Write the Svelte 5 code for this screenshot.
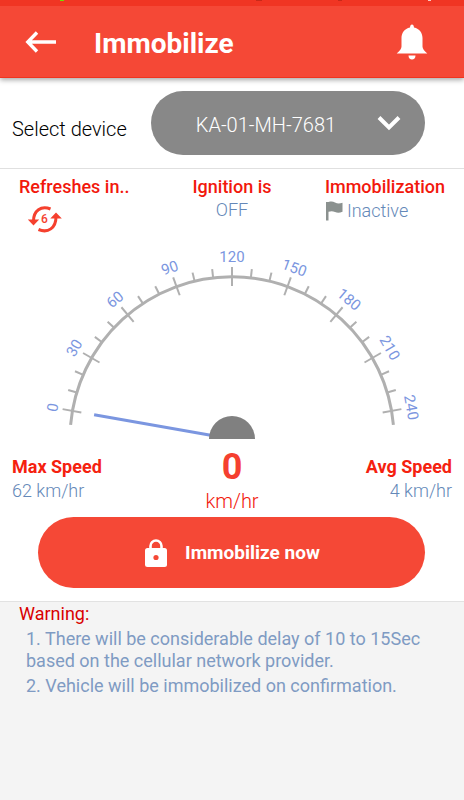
<script>
  const devices = ['KA-01-MH-7681']
  let device = $state(devices[0])
  let speed = $state(0)
  let maxSpeed = 62
  let avgSpeed = 4
  let refreshIn = 6

  // gauge: 0 sits 10deg above the left horizontal, 240 mirrors it
  const cx = 190
  const cy = 190
  const r = 162
  const steps = Array.from({ length: 25 }, (_, i) => i * 10)
  const angle = (v) => -80 + (v / 240) * 160
</script>

<div class="app">
  <header>
    <div class="statusbar">
      <svg width="100%" height="2" aria-hidden="true">
        <rect x="60" width="4" height="1" fill="#6fe000" />
        <rect x="256" width="6" height="1" fill="#c62a1a" />
        <rect x="338" width="4" height="1" fill="#c62a1a" />
        <rect x="428" width="3" height="1" fill="#f8c9c3" />
      </svg>
    </div>
    <div class="toolbar">
      <button class="icon" aria-label="Back">
        <svg width="32" height="22" viewBox="0 0 32 22" fill="none" stroke="#fff" stroke-width="3.400">
          <path d="M31 11H3M12 1.500L2.800 11L12 20.500" />
        </svg>
      </button>
      <h1>Immobilize</h1>
      <button class="icon" aria-label="Notifications">
        <svg width="32" height="36" viewBox="0 0 32 36" fill="#fff">
          <path d="M16 .5c1.200 0 1.800 1 2 3C23.500 4.600 26.500 9 26.500 14v8.500c0 2.200 1.500 4 4.800 7H.7c3.300-3 4.800-4.800 4.800-7V14C5.500 9 8.500 4.600 14 3.500c.2-2 .8-3 2-3z" />
          <path d="M12.500 31.500h7c0 2.500-1.500 4-3.500 4s-3.500-1.500-3.500-4z" />
        </svg>
      </button>
    </div>
  </header>

  <div class="device">
    <label for="device">Select device</label>
    <div class="picker">
      <select id="device" bind:value={device}>
        {#each devices as d}
          <option>{d}</option>
        {/each}
      </select>
      <svg width="24" height="16" viewBox="0 0 24 16" fill="none" stroke="#fff" stroke-width="4" aria-hidden="true">
        <path d="M2 2.500L12 12.500L22 2.500" />
      </svg>
    </div>
  </div>

  <div class="status">
    <div>
      <h2>Refreshes in..</h2>
      <button class="refresh" aria-label="Refresh">
        <svg width="36" height="30" viewBox="0 0 36 30">
          <g fill="none" stroke="#f5402e" stroke-width="3">
            <path d="M23.500 5C14 1 6.500 7 6.500 17" />
            <path d="M11.500 25.500C21 29.500 29 24 29 13" />
          </g>
          <path d="M.8 15.500h11.400L6.500 21.500zM23.300 14.500h11.500L29 8.500z" fill="#f5402e" />
          <text x="17.500" y="19" text-anchor="middle">{refreshIn}</text>
        </svg>
      </button>
    </div>
    <div class="mid">
      <h2>Ignition is</h2>
      <p>OFF</p>
    </div>
    <div>
      <h2>Immobilization</h2>
      <p class="flag">
        <svg width="18" height="20" viewBox="0 0 18 20" fill="#8b918f" aria-hidden="true">
          <path d="M1 1h2.500c3-.9 4.500-.5 6.500.6 2.300 1.200 4.500 1.300 7.500.2v9c-3 1.200-5.200 1.200-7.500.2-2.200-1-4-1.100-6.500-.2V19.500H1z" />
        </svg>
        Inactive
      </p>
    </div>
  </div>

  <svg class="gauge" width="380" height="192" viewBox="0 0 380 192" role="img" aria-label="Speed">
    <path
      d="M28.600 175.900A162 162 0 0 1 351.400 175.900"
      fill="none"
      stroke="#b0b0b0"
      stroke-width="3"
    />
    {#each steps as v}
      <g transform="rotate({angle(v)} {cx} {cy})">
        {#if v % 30 === 0}
          <line x1={cx} x2={cx} y1={cy - r - 10} y2={cy - r + 9} />
          <text x={cx} y={cy - r - 15} text-anchor="middle">{v}</text>
        {:else}
          <line x1={cx} x2={cx} y1={cy - r - 9} y2={cy - r} />
        {/if}
      </g>
    {/each}
    <line class="needle" x1={cx} x2={cx} y1={cy} y2={cy - 140} transform="rotate({angle(speed)} {cx} {cy})" />
    <rect x="160" y="190" width="60" height="2" fill="#fff" />
    <path d="M167 190a23 23 0 0 1 46 0z" fill="#808080" />
  </svg>

  <div class="speeds">
    <div>
      <h3>Max Speed</h3>
      <p>{maxSpeed} km/hr</p>
    </div>
    <div class="current">
      <strong>{speed}</strong>
      <span>km/hr</span>
    </div>
    <div class="right">
      <h3>Avg Speed</h3>
      <p>{avgSpeed} km/hr</p>
    </div>
  </div>

  <button class="immobilize">
    <svg width="22" height="28" viewBox="0 0 22 28" aria-hidden="true">
      <path d="M5.500 12V7a5.500 5.500 0 0 1 11 0v5" fill="none" stroke="#fff" stroke-width="2.600" />
      <rect y="9" width="22" height="19" rx="2.500" fill="#fff" />
      <circle cx="11" cy="18.500" r="2.600" fill="#f54836" />
    </svg>
    Immobilize now
  </button>

  <section class="warning">
    <h4>Warning:</h4>
    <p>1. There will be considerable delay of 10 to 15Sec based on the cellular network provider.</p>
    <p>2. Vehicle will be immobilized on confirmation.</p>
  </section>
</div>

<style>
  :global(body) {
    background: #f4f4f4;
  }

  .app {
    background: #fff;
    font-family: Roboto, "Liberation Sans", sans-serif;
    font-size: 18px;
    font-weight: 300;
    line-height: 24px;
    color: #6488b8;
  }

  h1, h2, h3, h4, p {
    margin: 0;
  }

  button {
    font-family: inherit;
    border: 0;
    padding: 0;
    background: none;
    cursor: pointer;
  }

  svg {
    display: block;
    flex: none;
  }

  header {
    background: #f54836;
    box-shadow: 0 2px 5px rgba(0, 0, 0, 0.35);
  }

  .statusbar {
    height: 6px;
    background: #f03523;
  }

  .toolbar {
    display: flex;
    align-items: center;
    height: 71px;
    padding: 0 36px 0 25px;
    border-bottom: 1px solid #f0341f;
  }

  h1 {
    flex: 1;
    margin-left: 37px;
    padding-top: 4px;
    font-size: 28px;
    line-height: 36px;
    font-weight: 700;
    color: #fff;
  }

  .device {
    display: flex;
    align-items: center;
    gap: 24px;
    height: 90px;
    padding: 0 39px 0 12px;
    border-bottom: 1px solid #e0e0e0;
  }

  .device label {
    padding-top: 12px;
    font-size: 20px;
    color: #000;
    white-space: nowrap;
  }

  .picker {
    flex: 1;
    display: grid;
    align-items: center;
  }

  .picker > * {
    grid-area: 1 / 1;
  }

  .picker svg {
    justify-self: end;
    margin-right: 24px;
    pointer-events: none;
  }

  select {
    appearance: none;
    width: 100%;
    height: 64px;
    padding: 3px 60px 0 45px;
    border: 0;
    border-radius: 32px;
    background: #888;
    color: #fff;
    font-family: inherit;
    font-size: 20px;
    font-weight: 300;
  }

  .status {
    display: grid;
    grid-template-columns: 1fr auto 1fr;
    padding: 6px 19px 0;
  }

  .status > :last-child {
    justify-self: end;
  }

  .mid {
    text-align: center;
  }

  h2 {
    font-size: 18px;
    line-height: 24px;
    font-weight: 500;
    color: #f2180c;
  }

  .mid p {
    line-height: 22px;
  }

  .refresh {
    display: block;
    margin: 5px 0 0 8px;
  }

  .refresh text {
    font-size: 12px;
    font-weight: 500;
    fill: #f5402e;
  }

  .flag {
    display: flex;
    align-items: center;
    gap: 4px;
  }

  .gauge {
    margin: 15px auto 0;
  }

  .gauge line {
    stroke: #b0b0b0;
    stroke-width: 2;
  }

  .gauge .needle {
    stroke: #7b96e0;
    stroke-width: 3;
  }

  .gauge text {
    font-size: 15px;
    font-weight: 400;
    fill: #7b96e0;
  }

  .speeds {
    display: grid;
    grid-template-columns: 1fr auto 1fr;
    padding: 0 12px;
  }

  .speeds > div {
    padding-top: 14px;
  }

  h3 {
    font-size: 18px;
    line-height: 24px;
    font-weight: 700;
    color: #f5210f;
  }

  .speeds > .current {
    display: flex;
    flex-direction: column;
    align-items: center;
    padding-top: 4px;
    color: #f2180c;
  }

  .current strong {
    font-size: 36px;
    line-height: 44px;
    font-weight: 700;
    color: #f54030;
  }

  .current span {
    font-size: 20px;
    line-height: 24px;
  }

  .right {
    text-align: right;
  }

  .immobilize {
    display: flex;
    align-items: center;
    justify-content: center;
    gap: 18px;
    width: calc(100% - 77px);
    height: 71px;
    margin: 4px 39px 13px 38px;
    padding-left: 2px;
    border-radius: 36px;
    background: #f54836;
    color: #fff;
    font-size: 19px;
    font-weight: 700;
  }

  .warning {
    padding: 0 36px 12px 26px;
    border-top: 1px solid #e2e2e2;
    background: #f4f4f4;
    line-height: 22px;
    font-weight: 400;
    color: #7f9bc3;
  }

  .warning h4 {
    margin: 1px 0 3px -7px;
    font-size: 18px;
    font-weight: 400;
    color: #d90000;
  }

  .warning p {
    margin-bottom: 3px;
  }
</style>
